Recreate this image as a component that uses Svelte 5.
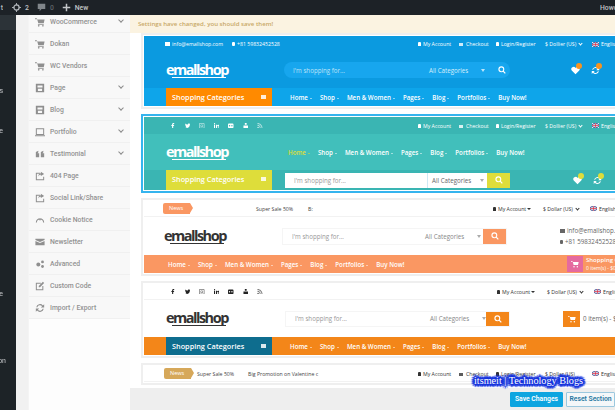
<script lang="ts">
    const panelItems = [
        { label: "WooCommerce", icon: "cart", more: true },
        { label: "Dokan", icon: "cart" },
        { label: "WC Vendors", icon: "cart" },
        { label: "Page", icon: "page", more: true },
        { label: "Blog", icon: "page", more: true },
        { label: "Portfolio", icon: "screen", more: true },
        { label: "Testimonial", icon: "quote", more: true },
        { label: "404 Page", icon: "share" },
        { label: "Social Link/Share", icon: "share" },
        { label: "Cookie Notice", icon: "gauge" },
        { label: "Newsletter", icon: "mail" },
        { label: "Advanced", icon: "gears" },
        { label: "Custom Code", icon: "edit" },
        { label: "Import / Export", icon: "sync" },
    ];

    const navLinks = ["Home", "Shop", "Men & Women", "Pages", "Blog", "Portfolios", "Buy Now!"];
</script>

{#snippet panelIcon(name: string)}
    <svg class="picon" viewBox="0 0 12 12" aria-hidden="true">
        {#if name === "cart"}
            <path d="M0 1.500h2l1 1.500h8.500l-1 4.500H4L2.600 2.600H0z M3.500 8.300h7v1h-7z" /><circle cx="4.500" cy="10.600" r="1" /><circle cx="9.500" cy="10.600" r="1" />
        {:else if name === "page"}
            <path fill-rule="evenodd" d="M1 1h10v10H1z M3 3v2.500h6V3z M3.500 7v2.500h5V7z" />
        {:else if name === "screen"}
            <path fill-rule="evenodd" d="M1 1.500h10v8H1z M2.200 2.700v5.600h7.600V2.700z M0 10h12v1H0z" />
        {:else if name === "quote"}
            <path d="M1 3.500 4 2v1.800L3 5h2v5H1z M7 3.500 10 2v1.800L9 5h2v5H7z" />
        {:else if name === "share"}
            <path fill-rule="evenodd" d="M1 2h5v1.200H2.200v6.600h7.600V7H11v4H1z M7 1l4 2.500L7 6V4.400C5.500 4.400 4.500 5 4 6.500 4 4 5 2.800 7 2.600z" />
        {:else if name === "gauge"}
            <path d="M1 9a5 5 0 0 1 10 0h-1.300a3.700 3.700 0 0 0-7.400 0z M5.500 4h1v2.500h-1z" />
        {:else if name === "mail"}
            <path d="M0.500 2h11v1.500L6 6 0.500 3.500z M0.500 4.700 6 7.200l5.500-2.500V10h-11z" />
        {:else if name === "gears"}
            <circle cx="4" cy="6.500" r="2.400" /><circle cx="9" cy="3.500" r="1.700" /><circle cx="9" cy="9" r="1.700" />
        {:else if name === "edit"}
            <path fill-rule="evenodd" d="M1 2h6v1.200H2.200v6.600h6.600V6H10v5H1z M9.500 1 11 2.500 6 7.500H4.500V6z" />
        {:else}
            <path d="M1.500 5A4.600 4.600 0 0 1 9.500 3L11 1.500V5.500H7L8.500 4A3.300 3.300 0 0 0 2.800 5z M10.500 7A4.600 4.600 0 0 1 2.500 9L1 10.500V6.500H5L3.500 8A3.300 3.300 0 0 0 9.200 7z" />
        {/if}
    </svg>
{/snippet}

{#snippet logo(dark = false)}
    <div class="logo" class:dark>emallshop</div>
{/snippet}

{#snippet flag()}
    <svg class="flag" viewBox="0 0 12 8" aria-hidden="true">
        <rect width="12" height="8" fill="#2c3f86" />
        <path d="M0 0l12 8M12 0 0 8" stroke="#fff" stroke-width="1.500" />
        <path d="M6 0v8M0 4h12" stroke="#fff" stroke-width="2.500" />
        <path d="M6 0v8M0 4h12" stroke="#d8324a" stroke-width="1.300" />
    </svg>
{/snippet}

{#snippet socialIcons()}
    <div class="socials">
        <svg viewBox="0 0 6 6" aria-hidden="true"><path d="M2.300 6V3.300H1.500V2.300h.8V1.600C2.300.6 2.900 0 3.800 0h.8v1h-.6c-.4 0-.5.2-.5.6v.7h1L4.400 3.300h-.9V6z" /></svg>
        <svg viewBox="0 0 6 6" aria-hidden="true"><path d="M0 4.900c2.700 1.300 5.300 0 5.300-3l.7-.8-.8.2.6-.7-.8.3C4.300.1 3 .5 3 1.700 2 1.700 1 1.200.4.500 0 1.200.2 2 .8 2.500L.3 2.400c0 .6.400 1.100 1 1.300H.7c.2.500.6.800 1.200.8-.5.400-1.100.5-1.900.4z" /></svg>
        <svg class="faint" viewBox="0 0 6 6" aria-hidden="true"><path fill-rule="evenodd" d="M1 0h4a1 1 0 0 1 1 1v4a1 1 0 0 1-1 1H1a1 1 0 0 1-1-1V1a1 1 0 0 1 1-1z M1 .8a.2.2 0 0 0-.2.2v4c0 .1.1.2.2.2h4a.2.2 0 0 0 .2-.2V1A.2.2 0 0 0 5 .8z M3 1.500a1.500 1.500 0 1 1 0 3 1.500 1.500 0 0 1 0-3z M3 2.200a.8.8 0 1 0 0 1.600.8.8 0 0 0 0-1.600z" /></svg>
        <svg viewBox="0 0 6 6" aria-hidden="true"><path d="M0 2h1.200v4H0z M.6 0a.7.7 0 1 1 0 1.400A.7.7 0 0 1 .6 0z M2.200 2h1.100v.6C3.900 1.700 6 1.600 6 3.500V6H4.800V3.800c0-1-1.400-1-1.400 0V6H2.200z" /></svg>
        <svg viewBox="0 0 6 6" aria-hidden="true"><path fill-rule="evenodd" d="M1 .5h4a1 1 0 0 1 1 1v3a1 1 0 0 1-1 1H1a1 1 0 0 1-1-1v-3a1 1 0 0 1 1-1z M1.700 2.200a.8.8 0 1 0 0 1.600.8.8 0 0 0 0-1.600z M4.300 2.200a.8.8 0 1 0 0 1.600.8.8 0 0 0 0-1.600z" /></svg>
        <svg viewBox="0 0 6 6" aria-hidden="true"><path d="M2 0h2v2H2z M.5 2.800h5V6h-5z" /></svg>
        <svg class="faint" viewBox="0 0 6 6" aria-hidden="true"><path d="M.5 0C3.500 0 6 2.500 6 5.500H5C5 3 3 1 .5 1z M.5 2c2 0 3.500 1.500 3.500 3.500H3C3 4 2 3 .5 3z M1.200 4a1 1 0 1 1 0 2 1 1 0 0 1 0-2z" /></svg>
    </div>
{/snippet}

{#snippet magnifier()}
    <svg class="mag" viewBox="0 0 12 12" aria-hidden="true"><circle cx="5" cy="5" r="3.600" fill="none" stroke="currentColor" stroke-width="1.700" /><path d="M7.700 7.700 11 11" stroke="currentColor" stroke-width="1.900" /></svg>
{/snippet}

{#snippet cartIcon()}
    <svg class="cart" viewBox="0 0 12 12" aria-hidden="true"><path d="M0 1.500h2l1 1.500h8.500l-1 4.500H4L2.600 2.600H0z" fill="currentColor" /><circle cx="4.500" cy="10" r="1.100" fill="currentColor" /><circle cx="9.500" cy="10" r="1.100" fill="currentColor" /></svg>
{/snippet}

{#snippet nav(variant: string)}
    <ul class="links {variant}">
        {#each navLinks as link (link)}
            <li>{link}{#if link !== "Buy Now!"}<i class="caret"></i>{/if}</li>
        {/each}
    </ul>
{/snippet}

{#snippet wishIcons(badge: string)}
    <div class="wish">
        <span class="wicon">
            <svg viewBox="0 0 12 12" aria-hidden="true"><path d="M6 11 1 6a3 3 0 0 1 5-3.500A3 3 0 0 1 11 6z" fill="#fff" /></svg>
            <b style:background={badge}></b>
        </span>
        <span class="wicon">
            <svg viewBox="0 0 12 12" aria-hidden="true"><path d="M1.500 5A4.600 4.600 0 0 1 9.500 3L11 1.500V5.500H7L8.500 4A3.300 3.300 0 0 0 2.800 5z M10.500 7A4.600 4.600 0 0 1 2.500 9L1 10.500V6.500H5L3.500 8A3.300 3.300 0 0 0 9.200 7z" fill="#fff" /></svg>
            <b style:background={badge}></b>
        </span>
    </div>
{/snippet}

{#snippet accountLinks(cur: string)}
    <div class="acct">
        <span class="a1"><i class="who"></i>My Account</span>
        <span class="a2"><i class="chk"></i>Checkout</span>
        <span class="a3"><i class="who"></i>Login/Register</span>
        <span class="a4">{cur}<i class="vee"></i></span>
        {@render flag()}<span>English</span>
    </div>
{/snippet}

{#snippet shortAccount()}
    <div class="acct dark a-3">
        <span class="ma"><i class="who"></i>My Account<i class="tri-s"></i></span>
        <span class="cur">$ Dollar (US)<i class="vee"></i></span>
        {@render flag()}<span>English</span>
    </div>
{/snippet}

<div class="page">
    <header class="adminbar">
        <span class="wp">t</span>
        <svg class="ab-ic first" viewBox="0 0 12 12" aria-hidden="true"><circle cx="6" cy="6" r="3.500" fill="none" stroke="#b4b9be" stroke-width="1.600" /><path d="M6 0v3M6 9v3M0 6h3M9 6h3" stroke="#b4b9be" stroke-width="1.200" /></svg>
        <span class="num">2</span>
        <svg class="ab-ic" viewBox="0 0 12 12" aria-hidden="true"><path d="M1 1h10v7H6l-2.500 3V8H1z" fill="#81868b" /></svg>
        <span class="num dim">0</span>
        <svg class="ab-ic" viewBox="0 0 12 12" aria-hidden="true"><path d="M5 1h2v4h4v2H7v4H5V7H1V5h4z" fill="#c3c6c9" /></svg>
        <span class="new">New</span>
        <span class="howdy">Howdy</span>
    </header>

    <div class="body">
        <aside class="sidebar">
            <div class="active"></div>
            <span class="m1">Pages</span>
            <span class="m2">Store</span>
            <span class="m3">Theme</span>
            <span class="m4">Option</span>
        </aside>

        <nav class="panel">
            <ul>
                {#each panelItems as item (item.label)}
                    <li>
                        {@render panelIcon(item.icon)}
                        <span>{item.label}</span>
                        {#if item.more}<i class="chev"></i>{/if}
                    </li>
                {/each}
            </ul>
        </nav>

        <main class="main">
            <div class="notice">Settings have changed, you should save them!</div>

            <div class="presets">
                <!-- header 1 -->
                <section class="card">
                    <div class="shot blue">
                        <div class="bar h16">
                            <div class="bar-left l1">
                                <span><i class="mini-mail"></i>info@emallshop.com</span>
                                <span><i class="mini-ph"></i>+81 59832452528</span>
                            </div>
                            {@render accountLinks("$ Dollier (US)")}
                        </div>
                        <div class="mid h36">
                            {@render logo()}
                            <div class="search pill">
                                <span class="ph-text">I'm shopping for...</span>
                                <span class="cat">All Categories</span>
                                <i class="tri"></i>
                                {@render magnifier()}
                            </div>
                            {@render wishIcons("#f7931e")}
                        </div>
                        <div class="navrow bluenav">
                            <div class="cats orange">Shopping Categories<i class="burger"></i></div>
                            {@render nav("n1")}
                        </div>
                    </div>
                </section>

                <!-- header 2, the selected one -->
                <section class="card selected">
                    <div class="shot teal">
                        <div class="bar h17 tealbar">
                            <div class="bar-left l2">{@render socialIcons()}</div>
                            {@render accountLinks("$ Dollier (US)")}
                        </div>
                        <div class="mid h36">
                            {@render logo()}
                            <div class="n2wrap">{@render nav("n2")}</div>
                        </div>
                        <div class="navrow tealbar tealbot">
                            <div class="cats yellow">Shopping Categories<i class="burger"></i></div>
                            <div class="search box white">
                                <span class="ph-text">I'm shopping for...</span>
                                <span class="cat">All Categories</span>
                                <i class="tri"></i>
                                <span class="go yellow">{@render magnifier()}</span>
                            </div>
                            {@render wishIcons("#dedd3a")}
                        </div>
                    </div>
                </section>

                <!-- header 3 -->
                <section class="card">
                    <div class="shot plain">
                        <div class="bar h16 lightbar">
                            <div class="bar-left l3">
                                <span class="news salmon">News</span>
                                <span class="sale">Super Sale 50%</span>
                                <span>B:</span>
                            </div>
                            {@render shortAccount()}
                        </div>
                        <div class="mid h38 m3row">
                            {@render logo(true)}
                            <div class="search box s3">
                                <span class="ph-text">I'm shopping for...</span>
                                <span class="cat">All Categories</span>
                                <i class="tri"></i>
                                <span class="go salmonbg">{@render magnifier()}</span>
                            </div>
                            <div class="contact">
                                <span><i class="mini-mail"></i>info@emallshop.com</span>
                                <span><i class="mini-ph"></i>+81 59832452528</span>
                            </div>
                        </div>
                        <div class="navrow salmonbg n3row">
                            {@render nav("n3")}
                            <div class="minicart"><span class="pink">{@render cartIcon()}</span><p>Shopping Cart<small>0 item(s) - $0.00</small></p></div>
                        </div>
                    </div>
                </section>

                <!-- header 4 -->
                <section class="card">
                    <div class="shot plain">
                        <div class="bar h16 lightbar">
                            <div class="bar-left l4">{@render socialIcons()}</div>
                            {@render shortAccount()}
                        </div>
                        <div class="mid h37">
                            {@render logo(true)}
                            <div class="search box s4">
                                <span class="ph-text">I'm shopping for...</span>
                                <span class="cat">All Categories</span>
                                <i class="tri"></i>
                                <span class="go orangebg">{@render magnifier()}</span>
                            </div>
                            <div class="cartbox"><span class="orangebg">{@render cartIcon()}</span>0 item(s) - $0.00</div>
                        </div>
                        <div class="navrow orangebg">
                            <div class="cats navy">Shopping Categories<i class="burger"></i></div>
                            {@render nav("n1")}
                        </div>
                    </div>
                </section>

                <!-- header 5, cut off by the footer -->
                <section class="card">
                    <div class="shot plain">
                        <div class="bar h16 lightbar">
                            <div class="bar-left l5">
                                <span class="news tan">News</span>
                                <span class="sale">Super Sale 50%</span>
                                <span>Big Promotion on Valentine c</span>
                            </div>
                            <div class="acct dark">
                                <span class="a1"><i class="who"></i>My Account</span>
                                <span class="a2"><i class="chk"></i>Checkout</span>
                                <span class="a3"><i class="who"></i>Login/Register</span>
                                <span class="a4">$ Dollar (US)</span>
                                {@render flag()}<span>English</span>
                            </div>
                        </div>
                    </div>
                </section>
            </div>

            <footer class="savebar">
                <button class="save" type="button">Save Changes</button>
                <button class="reset" type="button">Reset Section</button>
            </footer>
        </main>
    </div>

    <div class="watermark">itsmeit | Technology Blogs</div>
</div>

<style>
:global(body) {
    margin: 0;
    background: #f1f1f1;
}

.page {
    position: relative;
    width: 615px;
    height: 410px;
    overflow: hidden;
    font-family: "Open Sans", sans-serif;
    filter: blur(0.4px);
}

ul {
    list-style: none;
    margin: 0;
    padding: 0;
}

/* admin bar */
.adminbar {
    height: 15px;
    background: #1d2227;
    display: flex;
    align-items: center;
    color: #c3c6c9;
    font: 500 6.800px Roboto, sans-serif;
    white-space: nowrap;
}
.wp {
    width: 3px;
    color: #b4b9be;
    direction: rtl;
    overflow: hidden;
}
.ab-ic {
    width: 9px;
    height: 9px;
    margin-left: 8px;
}
.ab-ic.first {
    margin-left: 9px;
}
.num {
    margin-left: 4px;
}
.num.dim {
    color: #5f6468;
}
.new {
    margin-left: 4px;
}
.howdy {
    margin-left: auto;
    width: 15px;
    overflow: hidden;
}

.body {
    display: flex;
    height: 395px;
}

/* wp sidebar */
.sidebar {
    width: 16px;
    flex: none;
    background: #1d2327;
    color: #c3c4c7;
    font: 7px Roboto, sans-serif;
    display: flex;
    flex-direction: column;
    overflow: hidden;
    margin-right: 12px;
}
.sidebar span {
    line-height: 8px;
    white-space: nowrap;
    width: 3px;
    overflow: hidden;
    direction: rtl;
}
.sidebar .m4 {
    width: 6px;
}
.active {
    width: 16px;
    height: 15px;
    background: #2c3338;
    flex: none;
}
.m1 { margin-top: 57px; }
.m2 { margin-top: 32px; }
.m3 { margin-top: 155px; }
.m4 { margin-top: 59px; }

/* options panel */
.panel {
    width: 102px;
    flex: none;
    background: #fdfdfd;
    overflow: hidden;
    border-left: 1px solid #f4f4f4;
    box-sizing: border-box;
}
.panel ul {
    margin-top: -4px;
}
.panel li {
    height: 22px;
    box-sizing: border-box;
    background: #f8f8f8;
    border-bottom: 1px solid #f0f0f0;
    display: flex;
    align-items: center;
    padding-left: 6px;
    color: #929292;
    font: 500 6.800px Roboto, sans-serif;
    white-space: nowrap;
}
.picon {
    width: 10px;
    height: 10px;
    fill: #8f8f8f;
    margin-right: 5px;
    flex: none;
}
.chev {
    margin-left: auto;
    margin-right: 7px;
    margin-top: -3px;
    width: 3px;
    height: 3px;
    border-right: 1px solid #8b8b8b;
    border-bottom: 1px solid #8b8b8b;
    transform: rotate(45deg);
}

/* main column */
.main {
    flex: 1;
    min-width: 0;
    background: #fff;
    display: flex;
    flex-direction: column;
    position: relative;
}
.notice {
    height: 18px;
    flex: none;
    background: #fbf3e1;
    color: #c8a867;
    font: 600 6.100px/18px "Open Sans", sans-serif;
    padding-left: 8px;
    white-space: nowrap;
}
.presets {
    flex: 1;
    min-height: 0;
    overflow: hidden;
    padding-left: 11px;
    display: flex;
    flex-direction: column;
    gap: 5px;
}
.card {
    flex: none;
    width: 530px;
    border: 2px solid #efefef;
    padding: 1px;
    background: #fff;
}
.card.selected {
    border-color: #35b4ee;
}
.shot {
    color: #fff;
    font-size: 5.200px;
}
.shot.blue { background: #0b9ae0; }
.shot.teal { background: #41bfbb; }
.shot.plain { background: #fff; color: #444; }

.bar {
    display: flex;
    align-items: center;
    white-space: nowrap;
}
.h16 { height: 16px; }
.h17 { height: 17px; }
.tealbar { background: #3ab5b3; }
.lightbar { border-bottom: 1px solid #f2f2f2; box-sizing: border-box; }
.bar-left {
    flex: none;
    display: flex;
    align-items: center;
    box-sizing: border-box;
}
.l1 { width: 274px; padding-left: 21px; gap: 9px; }
.l2 { width: 274px; padding-left: 26px; }
.l3 { width: 349px; padding-left: 19px; }
.l4 { width: 353px; padding-left: 26px; }
.l5 { width: 274px; padding-left: 20px; }
.l3 .sale { margin-left: 66px; margin-right: 15px; }
.l5 .sale { margin-left: 6px; margin-right: 14px; }

.mini-mail, .mini-ph {
    display: inline-block;
    width: 5px;
    height: 4px;
    background: currentColor;
    margin-right: 2px;
}
.mini-ph {
    width: 3px;
    border-radius: 1px;
}

.acct {
    display: flex;
    align-items: center;
    flex: none;
}
.acct .a1 { width: 41px; }
.acct .a2 { width: 37px; }
.acct .a3 { width: 49px; }
.acct .a4 { width: 47px; }
.acct.dark { color: #333; }
.a-3 .ma { width: 50px; }
.a-3 .cur { width: 47px; }
.who, .chk {
    display: inline-block;
    width: 3px;
    height: 4px;
    background: currentColor;
    border-radius: 1px 1px 0 0;
    margin-right: 2px;
}
.chk {
    width: 4px;
    height: 3px;
    margin-right: 3px;
    border-radius: 0;
    opacity: 0.8;
}
.vee {
    display: inline-block;
    width: 2px;
    height: 2px;
    border-right: 1px solid currentColor;
    border-bottom: 1px solid currentColor;
    transform: rotate(45deg);
    margin-left: 3px;
    vertical-align: 1px;
}
.tri-s {
    display: inline-block;
    border: 2px solid transparent;
    border-top-color: currentColor;
    border-bottom: 0;
    margin-left: 1px;
    vertical-align: 1px;
}
.flag {
    width: 7px;
    height: 5px;
    margin-right: 2px;
    flex: none;
}

.socials {
    display: flex;
    gap: 9px;
}
.socials svg {
    width: 5.500px;
    height: 5.500px;
    fill: currentColor;
    flex: none;
}
.socials .faint {
    opacity: 0.6;
}
.plain .socials {
    color: #222;
}

.mid {
    display: flex;
    align-items: center;
    position: relative;
}
.h36 { height: 36px; }
.h37 { height: 37px; }
.h38 { height: 38px; }

.logo {
    width: 117px;
    flex: none;
    box-sizing: border-box;
    margin-left: 22px;
    font: 700 14.500px/15px "Open Sans", sans-serif;
    letter-spacing: -1.500px;
    color: #fff;
    background: linear-gradient(currentColor, currentColor) 6px 15px / 54px 1px no-repeat;
    padding-bottom: 2px;
}
.logo.dark {
    color: #333;
}
.m3row .logo {
    margin-left: 20px;
    width: 118px;
}

.search {
    display: flex;
    align-items: center;
    position: relative;
    height: 16px;
    font-size: 6.200px;
    flex: none;
}
.pill {
    width: 226px;
    margin-left: 1px;
    background: #17a6ee;
    border-radius: 8px;
}
.box {
    width: 225px;
    background: #fff;
    color: #888;
}
.ph-text {
    width: 136px;
    padding-left: 9px;
    flex: none;
    opacity: 0.85;
}
.pill .ph-text { color: #d7effb; }
.cat { width: 52px; flex: none; }
.pill .cat { color: #d7effb; }
.tri {
    width: 0;
    height: 0;
    border: 2px solid transparent;
    border-top: 3px solid currentColor;
    border-bottom: 0;
    opacity: 0.7;
}
.mag {
    width: 8px;
    height: 8px;
    margin-left: 13px;
    color: #fff;
}
.go {
    position: absolute;
    right: 0;
    top: 0;
    bottom: 0;
    width: 23px;
    display: flex;
    align-items: center;
    justify-content: center;
}
.go .mag { margin: 0; }
.white { height: 15px; margin-left: 13px; }
.white .ph-text { width: 133px; }
.white .cat { padding-left: 4px; border-left: 1px solid #cfe9f5; line-height: 15px; width: 48px; color: #666; }

.s3 { height: 17px; border: 1px solid #f5f5f5; box-sizing: border-box; }
.s3 .ph-text { width: 133px; }
.s4 { margin-left: 2px; border: 1px solid #f5f5f5; box-sizing: border-box; }
.s4 .ph-text { width: 135px; }

.wish {
    display: flex;
    gap: 11px;
    margin-left: 61px;
    flex: none;
}
.tealbot .wish {
    margin-left: 63px;
}
.wicon {
    position: relative;
    display: block;
    width: 9px;
    height: 9px;
}
.wicon svg {
    display: block;
    width: 9px;
    height: 9px;
}
.wicon b {
    position: absolute;
    top: -3px;
    left: 5px;
    width: 6px;
    height: 6px;
    border-radius: 50%;
}

.contact {
    display: flex;
    flex-direction: column;
    gap: 2px;
    margin-left: 53px;
    font-size: 6.200px;
    color: #666;
    white-space: nowrap;
}
.cartbox {
    margin-left: 53px;
    display: flex;
    align-items: center;
    gap: 3px;
    font-size: 6.200px;
    color: #666;
    white-space: nowrap;
}
.cartbox span {
    width: 17px;
    height: 16px;
    display: flex;
    align-items: center;
    justify-content: center;
    color: #fff;
}
.cart {
    width: 8px;
    height: 8px;
}

.navrow {
    display: flex;
    align-items: center;
    height: 18px;
    white-space: nowrap;
}
.tealbot {
    height: 20px;
}
.bluenav { background: #0ea5ea; }
.cats {
    width: 106px;
    margin-left: 22px;
    height: 18px;
    flex: none;
    box-sizing: border-box;
    padding-left: 6px;
    color: #fff;
    font: 600 7.300px/18px "Open Sans", sans-serif;
    position: relative;
}
.tealbot .cats { height: 20px; line-height: 19px; }
.burger {
    position: absolute;
    right: 6px;
    top: 7px;
    width: 5px;
    height: 4px;
    background: currentColor;
    opacity: 0.85;
}
.orange { background: #ff8a00; }
.yellow { background: #dedd3a; }
.navy { background: #0e6d8e; }
.salmonbg { background: #fa9762; }
.orangebg { background: #f38619; }

.links {
    display: flex;
    flex: none;
    font-weight: 600;
    font-size: 6.200px;
    color: #fff;
}
.links li {
    padding-right: 8px;
}
.n1 {
    margin-left: 18px;
}
.n2wrap {
    margin-left: 5px;
}
.n2 li:first-child {
    color: #dedd3a;
}
.n3 {
    margin-left: 24px;
}
.n3row {
    position: relative;
    color: #fff;
}
.caret {
    display: inline-block;
    border: 1.500px solid transparent;
    border-top-color: currentColor;
    border-bottom: 0;
    margin-left: 2px;
    vertical-align: 1px;
}
.minicart {
    position: absolute;
    left: 423px;
    top: 1px;
    display: flex;
    gap: 3px;
}
.minicart .pink {
    width: 16px;
    height: 16px;
    background: #e56a9f;
    display: flex;
    align-items: center;
    justify-content: center;
    color: #fff;
}
.minicart p {
    margin: 0;
    font-weight: 600;
    font-size: 6px;
    line-height: 8px;
}
.minicart small {
    display: block;
    font-size: 5px;
    font-weight: 400;
}

.news {
    position: relative;
    height: 11px;
    padding-left: 6px;
    line-height: 11px;
    color: #fff;
    font-size: 5.500px;
    border-radius: 2px 0 0 2px;
    box-sizing: border-box;
    width: 27px;
}
.news::after {
    content: "";
    position: absolute;
    left: 100%;
    top: 0;
    border: 5.500px solid transparent;
    border-right: 0;
    border-left: 3px solid;
}
.salmon { background: #fa9762; }
.salmon::after { border-left-color: #fa9762; }
.tan { background: #d6a85a; }
.tan::after { border-left-color: #d6a85a; }

/* save footer */
.savebar {
    position: absolute;
    left: 0;
    right: 0;
    bottom: 0;
    height: 22px;
    background: #eeeeee;
    display: flex;
    align-items: center;
    justify-content: flex-end;
    gap: 3px;
}
.savebar button {
    height: 15px;
    padding: 0;
    font: 600 6.800px Roboto, "Open Sans", sans-serif;
    border-radius: 1px;
}
.save {
    width: 53px;
    background: #0ea5e0;
    border: 1px solid #0ea5e0;
    color: #fff;
}
.reset {
    width: 49px;
    background: #f4f7f9;
    border: 1px solid #9cc8de;
    color: #2676a0;
}

.watermark {
    position: absolute;
    left: 474px;
    top: 374px;
    font: 10.200px/14px "Liberation Serif", serif;
    color: #fff;
    white-space: nowrap;
    text-shadow:
        1px 0 0 #1433dd, -1px 0 0 #1433dd, 0 1px 0 #1433dd, 0 -1px 0 #1433dd,
        1px 1px 0 #1433dd, -1px 1px 0 #1433dd, 1px -1px 0 #1433dd, -1px -1px 0 #1433dd,
        2px 0 0 #1433dd, -2px 0 0 #1433dd, 0 2px 0 #1433dd, 0 -2px 0 #1433dd,
        2px 2px 1px #1433dd, -2px 2px 1px #1433dd, 2px -2px 1px #1433dd, -2px -2px 1px #1433dd,
        3px 0 1px #1433dd, -3px 0 1px #1433dd, 0 3px 1px #1433dd, 0 -3px 1px #1433dd;
}
</style>
